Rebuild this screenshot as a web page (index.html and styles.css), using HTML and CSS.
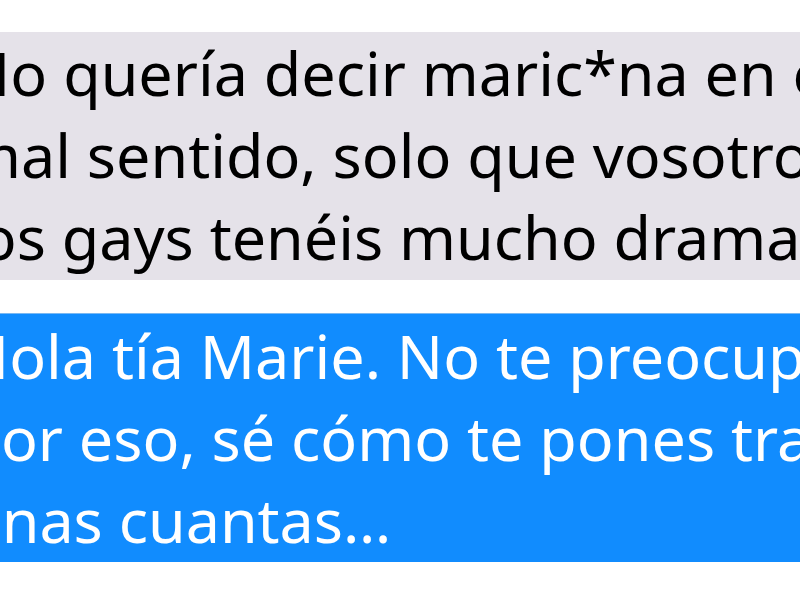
FILE: index.html
```html
<!DOCTYPE html>
<html lang="es">
<head>
<meta charset="utf-8">
<title>Chat</title>
<link rel="stylesheet" href="styles.css">
</head>
<body>
<main class="chat">
  <div class="bubble bubble-in">
    <p class="line">No quería decir maric*na en el</p>
    <p class="line">mal sentido, solo que vosotros</p>
    <p class="line">los gays tenéis mucho drama</p>
  </div>
  <div class="bubble bubble-out">
    <p class="line">Hola tía Marie. No te preocupes</p>
    <p class="line">Por eso, sé cómo te pones tras</p>
    <p class="line">unas cuantas…</p>
  </div>
</main>
</body>
</html>
```
FILE: styles.css
```css
html, body {
  margin: 0;
  padding: 0;
  background: #ffffff;
  width: 800px;
  height: 600px;
  overflow: hidden;
}
.chat {
  display: flex;
  flex-direction: column;
  gap: 33px;
  padding-top: 32px;
}
.bubble {
  overflow: hidden;
  box-sizing: border-box;
  font-family: "Noto Sans", "Open Sans", sans-serif;
  font-size: 61px;
  line-height: 82px;
}
.bubble-in {
  height: 248px;
  padding-top: 0;
  background: #e5e2e9;
  color: #000000;
}
.bubble-out {
  height: 249px;
  padding-top: 1px;
  background: #118cfe;
  color: #ffffff;
  border-top: 1px solid #7ab8f2;
}
.line {
  margin: 0 0 0 -36px;
  white-space: nowrap;
}
```
